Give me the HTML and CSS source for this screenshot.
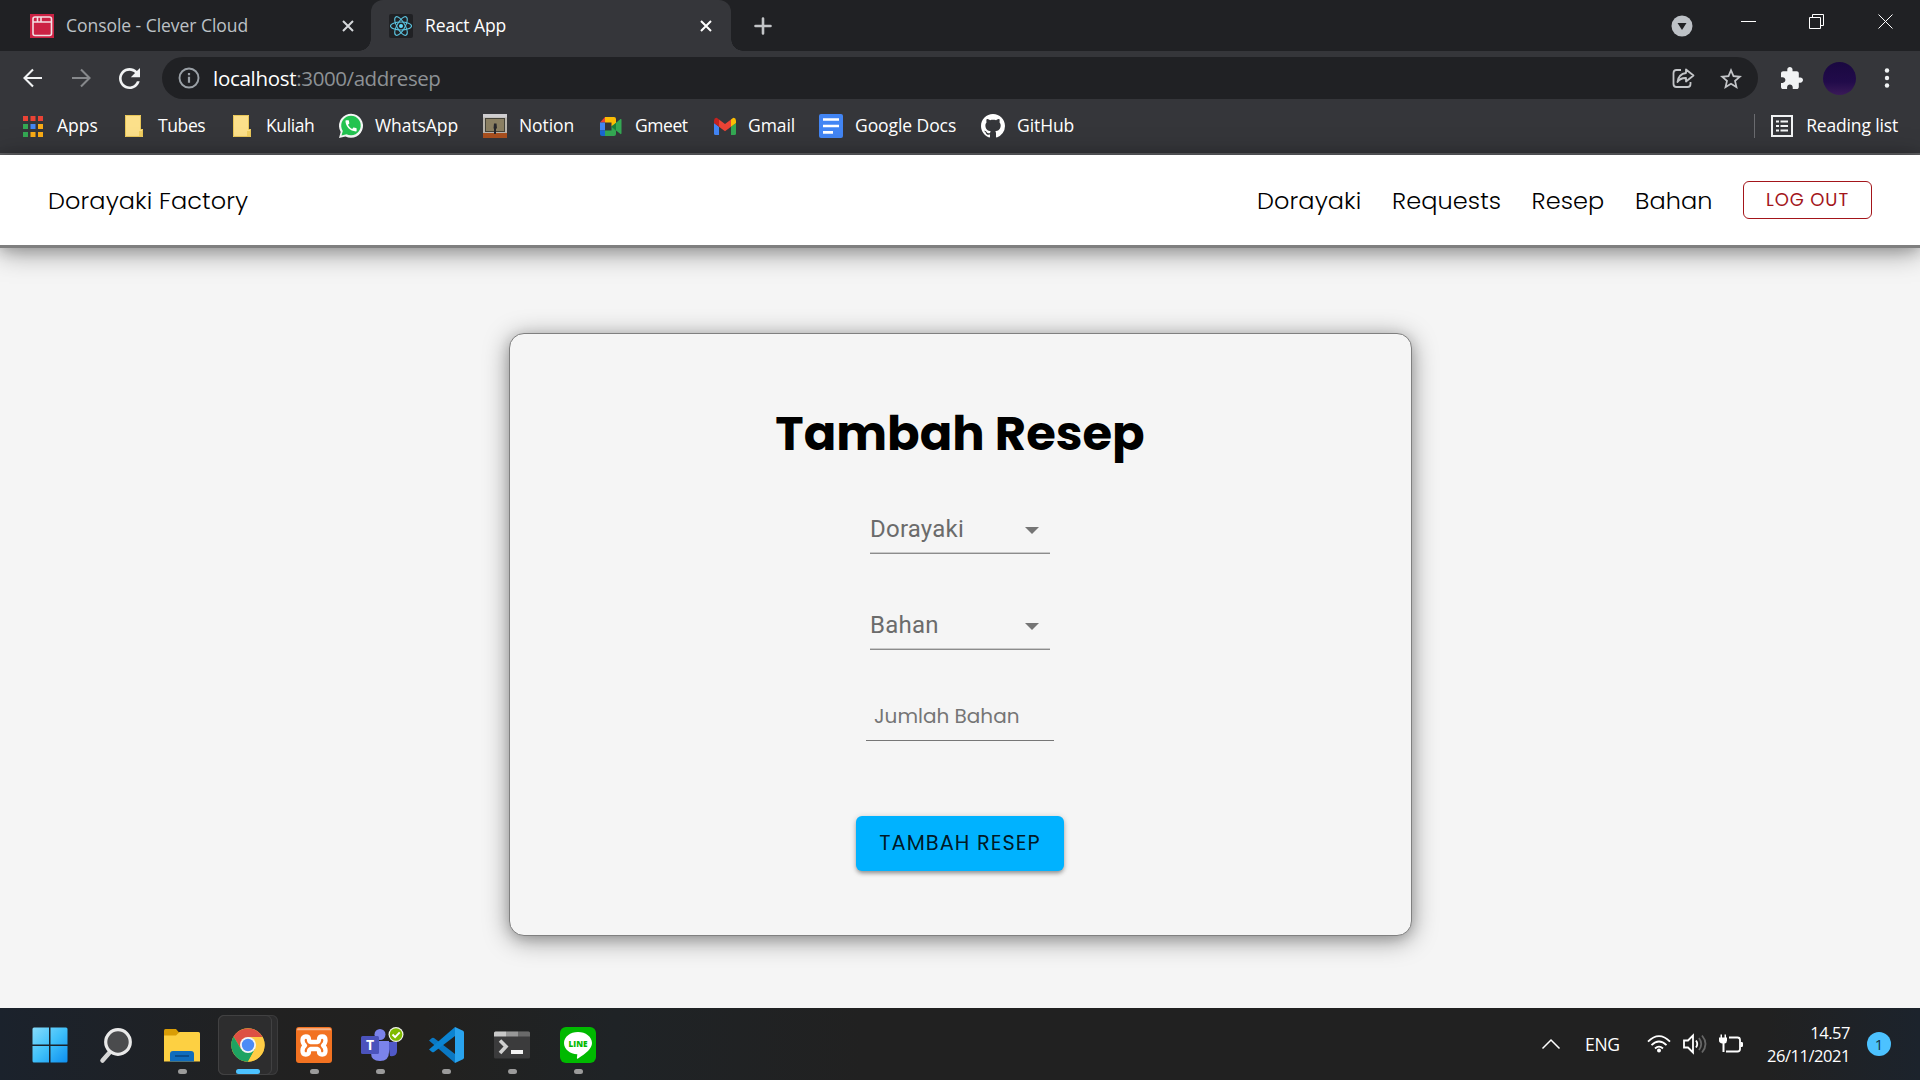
FILE: index.html
```
<!DOCTYPE html>
<html lang="id">
<head>
<meta charset="utf-8">
<title>React App</title>
<link rel="stylesheet" href="styles.css">
</head>
<body>
<header class="browser">
  <div class="tabstrip">
    <div class="tab tab-idle">
      <svg class="favicon" viewBox="0 0 24 24"><rect width="24" height="24" fill="#cc2244"/><g fill="none" stroke="#f3dfe3" stroke-width="1.6"><rect x="3" y="3" width="18.5" height="18.5" rx="2"/><path d="M3 8h18.500M7.500 3v5M11 3v5"/></g></svg>
      <span class="tab-title">Console - Clever Cloud</span>
      <svg class="tab-close" viewBox="0 0 12 12"><path d="M1 1l10 10M11 1L1 11"/></svg>
    </div>
    <div class="tab tab-active">
      <svg class="favicon" viewBox="0 0 24 24"><rect width="24" height="24" rx="2" fill="#202124"/><circle cx="12" cy="12" r="2" fill="#61dafb"/><g fill="none" stroke="#5bc4e0" stroke-width="1.100"><ellipse cx="12" cy="12" rx="10.500" ry="4"/><ellipse cx="12" cy="12" rx="10.500" ry="4" transform="rotate(60 12 12)"/><ellipse cx="12" cy="12" rx="10.500" ry="4" transform="rotate(120 12 12)"/></g></svg>
      <span class="tab-title">React App</span>
      <svg class="tab-close" viewBox="0 0 12 12"><path d="M1 1l10 10M11 1L1 11"/></svg>
    </div>
    <svg class="new-tab" viewBox="0 0 18 18"><path d="M9 1.500v15M1.500 9h15"/></svg>
    <div class="window-controls">
      <svg class="tab-search" viewBox="0 0 22 22"><circle cx="11" cy="11" r="10.500" fill="#bdc1c6"/><path d="M6.500 8h9L11 15z" fill="#202124"/></svg>
      <svg class="win-min" viewBox="0 0 15 15"><path d="M0 7.500h15"/></svg>
      <svg class="win-restore" viewBox="0 0 15 15"><path d="M.5 3.500h11v11H.5zM3.500 3.500v-3h11v11h-3"/></svg>
      <svg class="win-close" viewBox="0 0 15 15"><path d="M.5.5l14 14M14.500.5l-14 14"/></svg>
    </div>
  </div>

  <div class="toolbar">
    <svg class="nav-icon" viewBox="0 0 20 20"><path d="M19 10H2M10 1.500L1.500 10l8.500 8.500"/></svg>
    <svg class="nav-icon nav-disabled" viewBox="0 0 20 20"><path d="M1 10h17M10 1.500l8.500 8.500-8.500 8.500"/></svg>
    <svg class="reload" viewBox="4 4 16 16"><path d="M17.650 6.350C16.200 4.900 14.210 4 12 4c-4.420 0-7.990 3.580-7.990 8s3.570 8 7.990 8c3.730 0 6.840-2.550 7.730-6h-2.080c-.82 2.330-3.040 4-5.650 4-3.310 0-6-2.690-6-6s2.690-6 6-6c1.660 0 3.140.69 4.220 1.780L13 11h7V4l-2.350 2.350z"/></svg>
    <div class="omnibox">
      <svg class="info" viewBox="0 0 22 22"><circle cx="11" cy="11" r="9.500" fill="none" stroke="#9aa0a6" stroke-width="1.900"/><path d="M9.900 9.700h2.200v6H9.900zM9.900 6h2.200v2.200H9.900z" fill="#9aa0a6"/></svg>
      <span class="url"><b>localhost</b><span>:3000/addresep</span></span>
      <svg class="share" viewBox="0 0 23 21"><path d="M9 2H4.500Q1.500 2 1.500 5v11q0 3 3 3h11q3 0 3-3v-2"/><path d="M14 1.500l7.500 6-7.500 6V10q-5.500-.3-8.500 4Q6.500 6 14 5z"/></svg>
      <svg class="star" viewBox="2 2 20 19"><path d="M22 9.240l-7.190-.62L12 2 9.190 8.630 2 9.240l5.460 4.730L5.820 21 12 17.270 18.180 21l-1.630-7.030L22 9.240zM12 15.400l-3.760 2.270 1-4.280-3.320-2.880 4.380-.38L12 6.100l1.710 4.040 4.380.38-3.320 2.880 1 4.280L12 15.400z"/></svg>
    </div>
    <svg class="extension" viewBox="2 1 21 21"><path d="M20.500 11H19V7c0-1.100-.9-2-2-2h-4V3.500C13 2.120 11.880 1 10.500 1S8 2.120 8 3.500V5H4c-1.100 0-1.990.9-1.990 2v3.800H3.500c1.490 0 2.700 1.210 2.700 2.700s-1.210 2.700-2.700 2.700H2V20c0 1.100.9 2 2 2h3.800v-1.500c0-1.490 1.210-2.700 2.700-2.700 1.490 0 2.700 1.210 2.700 2.700V22H17c1.100 0 2-.9 2-2v-4h1.500c1.380 0 2.500-1.120 2.500-2.500S21.880 11 20.500 11z"/></svg>
    <span class="avatar"></span>
    <svg class="kebab" viewBox="0 0 6 20"><circle cx="3" cy="2.500" r="2.200"/><circle cx="3" cy="10" r="2.200"/><circle cx="3" cy="17.500" r="2.200"/></svg>
  </div>

  <div class="bookmarks">
    <div class="bookmark bm-apps">
      <svg viewBox="0 0 20 21"><path d="M0 0h5v5H0zM7.500 0h5v5h-5zM15 0h5v5h-5z" fill="#ea4335"/><path d="M0 8h5v5H0zM0 16h5v5H0z" fill="#34a853"/><path d="M7.500 8h5v5h-5z" fill="#4285f4"/><path d="M15 8h5v5h-5zM7.500 16h5v5h-5zM15 16h5v5h-5z" fill="#f9ab15"/></svg><span>Apps</span></div>
    <div class="bookmark bm-folder">
      <svg viewBox="0 0 18 22"><path d="M0 0h16v14h2v8H0z" fill="#fce08a"/><path d="M.5.5h15v14h2v7H.5z" fill="none" stroke="#e8c658"/><path d="M14 16h3v5h-3z" fill="#f0cf62"/></svg><span>Tubes</span></div>
    <div class="bookmark bm-folder">
      <svg viewBox="0 0 18 22"><path d="M0 0h16v14h2v8H0z" fill="#fce08a"/><path d="M.5.5h15v14h2v7H.5z" fill="none" stroke="#e8c658"/><path d="M14 16h3v5h-3z" fill="#f0cf62"/></svg><span>Kuliah</span></div>
    <div class="bookmark">
      <svg viewBox="0 0 24 24"><path d="M0 24l1.700-6A12 12 0 1 1 6.500 22.500z" fill="#f4f6f5"/><path d="M2.500 21.500l1.300-4.500A9.800 9.800 0 1 1 7.500 20.300z" fill="#22c350"/><path transform="translate(4.600 4.400) scale(.62)" fill="#fff" d="M20.010 15.380c-1.230 0-2.420-.2-3.530-.56-.35-.12-.74-.03-1.010.24l-1.570 1.970c-2.830-1.350-5.480-3.900-6.890-6.830l1.950-1.660c.27-.28.35-.67.24-1.020-.37-1.110-.56-2.300-.56-3.530 0-.54-.45-.99-.99-.99H4.190C3.650 3 3 3.240 3 3.990 3 13.280 10.730 21 20.010 21c.71 0 .99-.63.99-1.180v-3.450c0-.54-.45-.99-.99-.99z"/></svg><span>WhatsApp</span></div>
    <div class="bookmark">
      <svg viewBox="0 0 24 24"><rect width="24" height="24" fill="#b9b5ad"/><rect x="2.500" y="4.500" width="19" height="13" fill="#8a7f62" stroke="#454338"/><path d="M0 0h24v3.500H0z" fill="#cfced0"/><path d="M0 19h24v5H0z" fill="#a9501f"/><path d="M11 9.500h2.500l.5 5h-1V20h-2v-5.500h-.5z" fill="#26262b"/></svg><span>Notion</span></div>
    <div class="bookmark bm-meet">
      <svg viewBox="0 0 22 19"><path d="M5 0v5.500H0z" fill="#ea4335"/><path d="M5 0h9q2 0 2 2v4.500l-4.500 3V5.500H5z" fill="#fbbc04"/><path d="M0 5.500h5v8H0z" fill="#4285f4"/><path d="M0 13.500h5V19H2q-2 0-2-2z" fill="#1967d2"/><path d="M5 13.500h6.500v-4l4.500 4V17q0 2-2 2H5z" fill="#34a853"/><path d="M11.500 9.500L20.500 2Q21.500 1.500 21.500 3v13q0 1.500-1 1L16 13.500z" fill="#34a853"/><path d="M11.500 9.500L16 6v7.500z" fill="#188038"/></svg><span>Gmeet</span></div>
    <div class="bookmark bm-gmail">
      <svg viewBox="0 0 22 17"><path d="M0 5l5 3.700V17H1.500Q0 17 0 15.500z" fill="#4285f4"/><path d="M22 5l-5 3.700V17h3.500q1.500 0 1.500-1.500z" fill="#34a853"/><path d="M5 1.500l6 4.500 6-4.500v7.200l-6 4.500-6-4.500z" fill="#ea4335"/><path d="M0 2.500Q.3-.6 3-.1L5 1.500v7.200L0 5z" fill="#c5221f"/><path d="M22 2.500Q21.700-.6 19-.1l-2 1.600v7.200L22 5z" fill="#fbbc04"/></svg><span>Gmail</span></div>
    <div class="bookmark">
      <svg viewBox="0 0 24 24"><rect width="24" height="24" rx="2" fill="#4285f4"/><path d="M4 5.500h16M4 12h16M4 18.300h10" stroke="#fff" stroke-width="2.700"/></svg><span>Google Docs</span></div>
    <div class="bookmark">
      <svg viewBox="0 0 16 16"><path fill="#fff" d="M8 0C3.580 0 0 3.580 0 8c0 3.540 2.290 6.530 5.470 7.590.4.070.55-.17.55-.38 0-.19-.01-.82-.01-1.490-2.010.37-2.530-.49-2.690-.94-.09-.23-.48-.94-.82-1.130-.28-.15-.68-.52-.01-.53.63-.01 1.080.58 1.230.82.72 1.210 1.870.87 2.330.66.07-.52.28-.87.51-1.070-1.780-.2-3.640-.89-3.640-3.950 0-.87.31-1.590.82-2.150-.08-.2-.36-1.020.08-2.120 0 0 .67-.21 2.200.82.64-.18 1.320-.27 2-.27s1.360.09 2 .27c1.530-1.040 2.200-.82 2.200-.82.44 1.100.16 1.920.08 2.120.51.56.82 1.270.82 2.150 0 3.070-1.870 3.750-3.650 3.950.29.25.54.73.54 1.480 0 1.070-.01 1.930-.01 2.200 0 .21.15.46.55.38A8.010 8.010 0 0 0 16 8c0-4.420-3.580-8-8-8z"/></svg><span>GitHub</span></div>
    <div class="reading-list">
      <svg viewBox="0 0 22 22"><rect x="1" y="1" width="20" height="20" fill="none" stroke="#f1f3f4" stroke-width="2"/><path d="M5 6.500h3M5 11h3M5 15.500h3M9.500 6.500H17M9.500 11H17M9.500 15.500H17" stroke="#f1f3f4" stroke-width="2.200"/></svg><span>Reading list</span></div>
  </div>
</header>

<nav class="navbar">
  <a class="brand">Dorayaki Factory</a>
  <a class="nav-dorayaki">Dorayaki</a>
  <a class="nav-requests">Requests</a>
  <a class="nav-resep">Resep</a>
  <a class="nav-bahan">Bahan</a>
  <button class="logout">LOG OUT</button>
</nav>

<main class="page">
  <form class="card">
    <h1>Tambah Resep</h1>
    <div class="select"><span>Dorayaki</span><svg viewBox="0 0 14 7"><path d="M0 0h14L7 7z"/></svg></div>
    <div class="select select-bahan"><span>Bahan</span><svg viewBox="0 0 14 7"><path d="M0 0h14L7 7z"/></svg></div>
    <input class="amount" type="text" placeholder="Jumlah Bahan">
    <button class="submit" type="button">TAMBAH RESEP</button>
  </form>
</main>

<footer class="taskbar">
  <div class="apps">
    <div class="app app-start"><svg viewBox="0 0 36 36"><defs><linearGradient id="win" x1="0" y1="0" x2="1" y2="1"><stop offset="0" stop-color="#86dcfb"/><stop offset=".5" stop-color="#3fc0fa"/><stop offset="1" stop-color="#0d8ff0"/></linearGradient></defs><path fill="url(#win)" d="M2 .5h15v17H.5V2Q.5.5 2 .5zM18.500.5H34q1.500 0 1.500 1.500v15.500h-17zM.5 19H17v16.500H2Q.5 35.500.5 34zM18.500 19h17v15q0 1.500-1.500 1.500H18.500z"/></svg></div>
    <div class="app"><svg viewBox="0 0 36 36"><path d="M12 25l-7.500 8.500" stroke="#d5d5d5" stroke-width="4.500" stroke-linecap="round"/><circle cx="20" cy="15" r="12.300" fill="#4a4b4d" stroke="#e9e9e9" stroke-width="3.200"/></svg></div>
    <div class="app open"><svg viewBox="0 0 36 36"><path d="M0 3.500Q0 2 1.500 2H12l3.500 4-3 4H0z" fill="#d99d06"/><path d="M0 8.500h12L15.500 5H34.500Q36 5 36 6.500V34.500H0z" fill="#fdd042"/><path d="M6 34.500V27q0-3 3-3h18q3 0 3 3v7.500z" fill="#0f6cbd"/><path d="M11 29h14" stroke="#0a4a88" stroke-width="1.800"/></svg></div>
    <div class="app open active"><svg viewBox="0 0 36 36"><circle cx="18" cy="18" r="16.700" fill="#fcc934"/><path d="M3.600 9.600A16.700 16.700 0 0 1 32.500 10H18l-7 12z" fill="#dd5144"/><path d="M3.600 9.600A16.700 16.700 0 0 0 18 34.700L25 22 11 22z" fill="#1da362"/><path d="M18 10h14.500A16.700 16.700 0 0 1 18 34.700L25 22z" fill="#ffcd46"/><circle cx="18" cy="18" r="8" fill="#f5f5f5"/><circle cx="18" cy="18" r="6.200" fill="#4c8bf5"/></svg></div>
    <div class="app open"><svg viewBox="0 0 36 36"><rect width="36" height="36" rx="3" fill="#f27221"/><path d="M2 1.200h32q1 0 1 2H1q0-2 1-2z" fill="#f7b58b"/><path d="M14.500 14.500h7q1.500-.5 1.500-2.500 0-3 3.200-3 3.300 0 3.300 3.800 0 3.200-2.500 5.200 2.500 2 2.500 5.200 0 3.800-3.300 3.800-3.200 0-3.200-3 0-2-1.500-2.500h-7q-1.500.5-1.500 2.500 0 3-3.200 3-3.300 0-3.300-3.800 0-3.200 2.500-5.200-2.500-2-2.500-5.200Q6.500 9 9.800 9 13 9 13 12q0 2 1.500 2.500z" transform="translate(0 .5)" fill="none" stroke="#fff" stroke-width="4.300" stroke-linejoin="round"/></svg></div>
    <div class="app open app-teams"><svg viewBox="0 0 44 36"><circle cx="19" cy="7.500" r="5.500" fill="#7b83eb"/><path d="M27 15h9v9q0 6-7 5z" fill="#5059c9"/><path d="M11 14h17v11q0 9-9 9t-9-8z" fill="#7b83eb"/><rect y="9" width="18" height="18" rx="1.500" fill="#4b53bc"/><text x="9" y="23" text-anchor="middle" class="teams-letter">T</text><circle cx="35" cy="7.500" r="7.500" fill="#f2f5ea"/><circle cx="35" cy="7.500" r="6.300" fill="#7fba00"/><path d="M31.500 7.500l2.600 2.700 4.600-4.800" fill="none" stroke="#fff" stroke-width="1.900"/></svg></div>
    <div class="app open"><svg viewBox="0 0 36 36"><path d="M1 13.500L4 11q1-.7 2 0L27 27v9z" fill="#0a78c4"/><path d="M1 22.500L4 25q1 .7 2 0L27 9V0z" fill="#0b84d2"/><path d="M27 0l8 3.700q1 .5 1 1.700v25.200q0 1.200-1 1.700L27 36z" fill="#29a3ee"/></svg></div>
    <div class="app open"><svg viewBox="0 0 36 36"><rect y="4.500" width="36" height="27" rx="1.500" fill="#3b3b3c"/><path d="M0 9.500V6q0-1.500 1.500-1.500H12v5z" fill="#c8c8c8"/><path d="M12 4.500h12v5H12z" fill="#989898"/><path d="M24 4.500h10.500Q36 4.500 36 6v3.500H24z" fill="#6a6a6a"/><path d="M6 13.500l6 6-6 6.500" fill="none" stroke="#d0d0d0" stroke-width="3.600"/><path d="M17 23h12v4H17z" fill="#f3f3f3"/></svg></div>
    <div class="app open"><svg viewBox="0 0 36 36"><rect width="36" height="36" rx="6" fill="#00b900"/><path d="M18 5c7.700 0 14 4.800 14 11 0 5.500-6 10.500-14 15.500-1 .6-1.300.1-1-1.200l.3-3C9.800 27 4 22.200 4 16 4 9.800 10.300 5 18 5z" fill="#fff"/><text x="18" y="19.600" text-anchor="middle" class="line-letters">LINE</text></svg></div>
  </div>
  <div class="tray">
    <svg class="chevron" viewBox="0 0 18 10"><path d="M.5 9.500L9 1l8.500 8.500"/></svg>
    <span class="lang">ENG</span>
    <svg class="wifi" viewBox="0 0 24 18"><path d="M1 6.700Q12-4.500 23 6.700M4.500 10.200q7.500-7.300 15 0M8 13.500q4-3.700 8 0"/><circle cx="12" cy="15.500" r="2" class="solid"/></svg>
    <svg class="volume" viewBox="0 0 24 20"><path d="M1 6.500h4L10 1.500v17L5 13.500H1z"/><path d="M13 6.500q2.500 3.500 0 7"/><path class="faint" d="M16 4q4.500 6 0 12M19 1.500q7 8.500 0 17"/></svg>
    <svg class="battery" viewBox="0 0 24 20"><path d="M10 3.500h8.500q2.500 0 2.500 2.500v9q0 2.500-2.500 2.500H7"/><path class="solid" d="M0 3.500h1.500V.5h1.500v3h2.500V.5H7v3h1v3q0 2.500-2.500 3V18H3.500V9.500Q0 9 0 6.500zM21.500 8h1.200q1.300 0 1.300 1.200v2.600q0 1.200-1.300 1.200h-1.200z"/></svg>
    <div class="clock"><span>14.57</span><span>26/11/2021</span></div>
    <span class="badge">1</span>
  </div>
</footer>
</body>
</html>
```
FILE: styles.css
```
* { box-sizing: border-box; }
body {
  margin: 0;
  width: 1920px;
  height: 1080px;
  overflow: hidden;
  display: flex;
  flex-direction: column;
  background: #f5f5f5;
  font-family: "Open Sans", "Noto Sans", sans-serif;
  font-size: 17.5px;
}
svg { display: block; flex: none; overflow: visible; }
span { white-space: nowrap; }

/* Browser chrome */
.browser { flex: none; height: 155px; background: #35363a; border-bottom: 2px solid #606164; color: #fff; }
.tabstrip { display: flex; align-items: center; height: 51px; background: #202124; }
.tab { display: flex; align-items: center; height: 51px; }
.tab-idle { width: 371px; padding: 0 17px 0 30px; color: #bdc1c6; border-bottom-right-radius: 12px; background: #202124; }
.tab-active { width: 360px; padding: 0 19px 0 18px; background: #35363a; border-radius: 12px 12px 0 0; position: relative; }
.tab-active::before,
.tab-active::after { content: ""; position: absolute; bottom: 0; width: 12px; height: 12px; }
.tab-active::before { left: -12px; background: radial-gradient(circle at 0 0, #202124 11.5px, #35363a 12px); }
.tab-active::after { right: -12px; background: radial-gradient(circle at 100% 0, #202124 11.5px, #35363a 12px); }
.favicon { width: 24px; height: 24px; margin-right: 12px; }
.tab-title { flex: 1; line-height: 24px; margin-bottom: 1px; letter-spacing: -.04px; }
.tab-active .tab-title { letter-spacing: -.1px; }
.tab-close { width: 12px; height: 12px; stroke: #d5d8db; stroke-width: 2; }
.tab-active .tab-close { stroke: #fff; }
.new-tab { width: 18px; height: 18px; margin-left: 23px; stroke: #c3c5c8; stroke-width: 2.6; stroke-linecap: round; }
.window-controls { display: flex; align-items: center; margin-left: auto; padding-right: 27px; fill: none; stroke: #fff; }
.tab-search { width: 22px; height: 22px; margin-right: 48px; stroke: none; }
.win-min, .win-restore, .win-close { width: 15px; height: 15px; margin-bottom: 8px; }
.win-min { margin-right: 53px; }
.win-restore { margin-right: 54px; }

.toolbar { display: flex; align-items: center; height: 48px; padding: 6px 30px 0 23px; }
.nav-icon { width: 20px; height: 20px; margin-right: 28px; fill: none; stroke: #f1f3f4; stroke-width: 2.1; }
.nav-disabled { stroke: #86888b; }
.reload { width: 21px; height: 21px; margin-right: 22px; fill: #f1f3f4; }
.omnibox { display: flex; align-items: center; width: 1596px; height: 42px; padding: 0 16px 0 16px; border-radius: 21px; background: #202124; }
.info { width: 22px; height: 22px; margin-right: 13px; }
.url { flex: 1; font-size: 20.5px; line-height: 30px; color: #8d9195; letter-spacing: -.42px; }
.url b { font-weight: 400; color: #fff; letter-spacing: -.28px; }
.share { width: 23px; height: 21px; margin-right: 25px; fill: none; stroke: #c3c5c8; stroke-width: 1.8; stroke-linejoin: round; }
.star { width: 22px; height: 21px; fill: #c3c5c8; }
.extension { width: 22px; height: 22px; margin-left: 23px; fill: #f1f3f4; }
.avatar { width: 33px; height: 33px; margin-left: 20px; border-radius: 50%; background: linear-gradient(#1a0840, #210b4a 60%, #3a1a58); }
.kebab { width: 6px; height: 20px; margin-left: 28px; fill: #f1f3f4; }

.bookmarks { display: grid; grid-template-columns: 102px 108px 106px 144px 117px 114px 105px 162px 1fr auto; align-items: center; height: 54px; padding: 0 22px 0 23px; }
.bookmark { display: flex; align-items: center; gap: 12px; line-height: 24px; letter-spacing: -.08px; }
.bookmark span, .reading-list span { margin-bottom: 2px; }
.bookmark svg { width: 24px; height: 24px; }
.bm-apps { gap: 14px; letter-spacing: 0; }
.bm-apps svg { width: 20px; height: 21px; }
.bm-folder { gap: 15px; letter-spacing: -.4px; }
.bm-folder svg { width: 18px; height: 22px; }
.bm-meet { gap: 13px; letter-spacing: -.45px; }
.bm-meet svg { width: 22px; height: 19px; }
.bm-gmail svg { width: 22px; height: 17px; }
.reading-list { display: flex; align-items: center; gap: 13px; height: 24px; padding-left: 16px; border-left: 1px solid #6a6b6f; letter-spacing: -.15px; }
.reading-list svg { width: 22px; height: 22px; }
.reading-list span { line-height: 24px; }

/* Site header */
.navbar, .card { font-family: Poppins, Inter, sans-serif; }
.navbar {
  flex: none;
  display: flex;
  align-items: center;
  height: 93px;
  padding: 0 48px;
  border-bottom: 3px solid #7f7f7f;
  background: #fff;
  box-shadow: 0 3px 12px rgba(0, 0, 0, .15), 0 4px 26px rgba(0, 0, 0, .4);
  color: #000;
  font-size: 24px;
  font-weight: 300;
  line-height: 36px;
  letter-spacing: .1px;
}
.navbar a { white-space: nowrap; margin-top: 2px; }
.brand { margin-right: auto; }
.nav-dorayaki { width: 135px; }
.nav-requests { width: 139.5px; }
.nav-resep { width: 103.5px; }
.nav-bahan { width: 108px; }
.logout {
  width: 129px;
  height: 38px;
  padding: 0 0 2px;
  border: 1px solid #a3151a;
  border-radius: 6px;
  background: #fff;
  color: #a3151a;
  font: 400 18px Poppins, Inter, sans-serif;
  letter-spacing: .9px;
}

/* Form card */
.page { flex: 1; display: flex; justify-content: center; align-items: flex-start; padding: 85px 0 0 1px; }
.card {
  display: flex;
  flex-direction: column;
  align-items: center;
  width: 903px;
  height: 603px;
  padding: 64px 1px 0 0;
  border: 1px solid #808080;
  border-radius: 15px;
  background: #f5f5f5;
  box-shadow: 0 3px 12px rgba(0, 0, 0, .15), 0 4px 26px rgba(0, 0, 0, .4);
}
h1 { margin: 0; font-size: 48px; font-weight: 700; line-height: 72px; color: #000; }
.select {
  display: flex;
  justify-content: space-between;
  width: 180px;
  height: 40px;
  margin-top: 44px;
  padding: 1px 11px 0 0;
  border-bottom: 1px solid #8c8c8c;
  box-shadow: inset 0 -1px #c9c9c9;
  font: 400 24px/28px Roboto, sans-serif;
  letter-spacing: .22px;
  color: #6b6b6b;
}
.select-bahan { margin-top: 56px; }
.select svg { width: 14px; height: 7px; margin: 12px 0 0; fill: #757575; }
.amount {
  width: 188px;
  height: 40px;
  margin-top: 51px;
  padding: 0 8px 10px;
  border: 0;
  border-bottom: 1px solid #767676;
  background: transparent;
  font: 400 20px/30px Poppins, Inter, sans-serif;
}
.amount::placeholder { color: #757575; opacity: 1; }
.submit {
  width: 208px;
  height: 55px;
  margin-top: 75px;
  padding: 0 0 2px;
  border: 0;
  border-radius: 6px;
  background: #00b2ff;
  box-shadow: 0 3px 4px -1px rgba(0, 0, 0, .35), 0 1px 6px rgba(0, 0, 0, .18);
  color: rgba(0, 0, 0, .87);
  font: 400 21px Poppins, Inter, sans-serif;
  letter-spacing: 1px;
}

/* Taskbar */
.taskbar { flex: none; display: flex; height: 72px; background: linear-gradient(90deg, #1b222c, #212121 14%, #22211f 22%, #1f2326 32%, #212121 45%, #212121 92%, #1c232c); color: #fff; }
.apps { display: flex; padding: 7px 0 5px 20px; gap: 6px; }
.app { position: relative; display: flex; justify-content: center; width: 60px; height: 60px; padding-top: 12px; }
.app svg { width: 36px; height: 36px; }
.app-start { padding-right: 1px; }
.app.open::after { content: ""; position: absolute; left: 26px; bottom: 1px; width: 9px; height: 5px; border-radius: 3px; background: #9b9b9b; }
.app.active { border-radius: 6px; background: #2d2d2e; box-shadow: inset 0 0 0 1px #3b3b3c; }
.app.active::before { content: ""; position: absolute; inset: 0 6px 0 0; border: 1px solid #414142; border-radius: 6px; }
.app.active::after { left: 18px; width: 24px; background: #4cc2ff; }
.app.active svg { margin-right: 1px; z-index: 1; }
.app-teams svg { width: 44px; margin-left: 6px; }
.teams-letter { font: 700 14px "Open Sans", sans-serif; fill: #fff; }
.line-letters { font: 800 8.2px "Open Sans", sans-serif; fill: #00b900; }
.tray { display: flex; align-items: center; margin-left: auto; padding-right: 29px; fill: none; stroke: #fff; stroke-width: 1.8; }
.chevron { width: 18px; height: 10px; margin-right: 25px; stroke-width: 1.5; }
.lang { width: 35px; margin-right: 27px; letter-spacing: -.3px; }
.wifi { width: 24px; height: 18px; margin-right: 12px; }
.volume { width: 24px; height: 20px; margin-right: 12px; }
.battery { width: 24px; height: 20px; }
.solid { fill: #fff; stroke: none; }
.faint { stroke: #666; }
.clock { display: flex; flex-direction: column; align-items: flex-end; width: 84px; margin: 0 17px 0 23px; font-size: 16.5px; line-height: 23px; letter-spacing: -.45px; }
.badge { width: 24px; height: 24px; border-radius: 50%; background: #4cc2ff; color: #12303f; font-size: 15px; line-height: 24px; text-align: center; }
```
